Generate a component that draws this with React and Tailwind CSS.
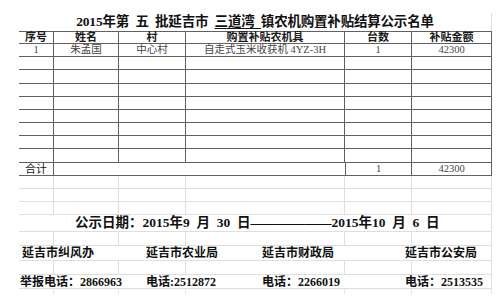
import React from "react";

const serif = "font-['Liberation_Serif','Noto_Sans_CJK_SC',serif]";

// column widths of the sheet (the right border of each cell is the grid line)
const cols = ["w-[35px]", "w-[65px]", "w-[67px]", "w-[159px]", "w-[67px]", "w-[80px]"];

const rows = [
  ["1", "朱孟国", "中心村", "自走式玉米收获机 4YZ-3H", "1", "42300"],
  [], [], [], [], [], [], [], [],
];
const rowHeights = ["h-[13px]", "h-[13px]", "h-[14px]", "h-[13px]", "h-[13px]", "h-[13px]", "h-[13px]", "h-[13px]", "h-[14px]"];

const GridRow = ({ height }) => (
  <div className={`flex ${height} border-b border-[#dedede]`}>
    {cols.map((w, i) => (
      <div key={i} className={`${w} h-full border-r border-[#dedede]`} />
    ))}
  </div>
);

const App = () => {
  return (
    <div className={`w-[500px] h-[305px] bg-white overflow-hidden ${serif}`}>
      {/* title */}
      <div className="flex h-[31px] ml-[19px] w-[473px]">
        <div className="flex-1 flex items-end justify-center pb-[3px] text-[13.5px] leading-none text-[#111] font-bold tracking-[-0.2px]">
          <span>
            2015年第&nbsp;&nbsp;五&nbsp;&nbsp;批延吉市&nbsp;&nbsp;
            <span className="underline underline-offset-2">三道湾&nbsp;&nbsp;</span>
            镇农机购置补贴结算公示名单
          </span>
        </div>
        <div className="self-end h-[18px] border-r border-[#dedede]" />
      </div>

      {/* table */}
      <div className="ml-[19px] w-[473px] border-t border-[#606060]">
        <div className="flex h-[12px] border-b border-[#606060] text-[11px] font-bold text-[#1a1a1a] leading-none">
          {["序号", "姓名", "村", "购置补贴农机具", "台数", "补贴金额"].map((t, i) => (
            <div key={i} className={`${cols[i]} h-full flex items-center justify-center border-r border-[#606060]`}>
              {t}
            </div>
          ))}
        </div>
        {rows.map((r, ri) => (
          <div key={ri} className={`flex ${rowHeights[ri]} border-b border-[#606060] text-[10.5px] text-[#444] leading-none`}>
            {cols.map((w, i) => (
              <div key={i} className={`${w} h-full flex items-center justify-center border-r border-[#606060]`}>
                {r[i] || ""}
              </div>
            ))}
          </div>
        ))}
        <div className="flex h-[13px] border-b border-[#606060] text-[10.5px] leading-none">
          <div className="w-[35px] h-full flex items-center justify-center border-r border-[#606060] text-[11px] text-[#1a1a1a]">
            合计
          </div>
          <div className="w-[291px] h-full" />
          <div className="w-[67px] h-full flex items-center justify-center border-x border-[#606060] text-[#444]">1</div>
          <div className="w-[80px] h-full flex items-center justify-center border-r border-[#606060] text-[#444]">42300</div>
        </div>
      </div>

      {/* sheet gridlines and footer */}
      <div className="ml-[19px] w-[473px]">
        <GridRow height="h-[13px]" />
        <GridRow height="h-[13px]" />
        <GridRow height="h-[13px]" />
        <div className="flex items-center h-[17px] border-b border-r border-[#dedede] pl-[56px] text-[13.5px] font-bold text-[#111] leading-none">
          公示日期：2015年9&nbsp;&nbsp;月&nbsp;&nbsp;30&nbsp;&nbsp;日——————2015年10&nbsp;&nbsp;月&nbsp;&nbsp;6&nbsp;&nbsp;日
        </div>
        <GridRow height="h-[14px]" />
        <div className="flex items-center h-[15px] border-b border-r border-[#dedede] text-[12px] font-bold text-[#111] leading-none">
          <div className="w-[127px] pl-[3px]">延吉市纠风办</div>
          <div className="w-[116px]">延吉市农业局</div>
          <div className="w-[143px]">延吉市财政局</div>
          <div className="flex-1">延吉市公安局</div>
        </div>
        <GridRow height="h-[14px]" />
        <div className="flex items-center h-[14px] border-b border-r border-[#dedede] text-[12px] font-bold text-[#111] leading-none">
          <div className="w-[127px] pl-[1px]">举报电话：2866963</div>
          <div className="w-[116px]">电话:2512872</div>
          <div className="w-[143px]">电话：2266019</div>
          <div className="flex-1">电话：2513535</div>
        </div>
        <div className="flex h-[5px]">
          {cols.map((w, i) => (
            <div key={i} className={`${w} h-full border-r border-[#e6e6e6]`} />
          ))}
        </div>
      </div>
    </div>
  );
};

export default App;
